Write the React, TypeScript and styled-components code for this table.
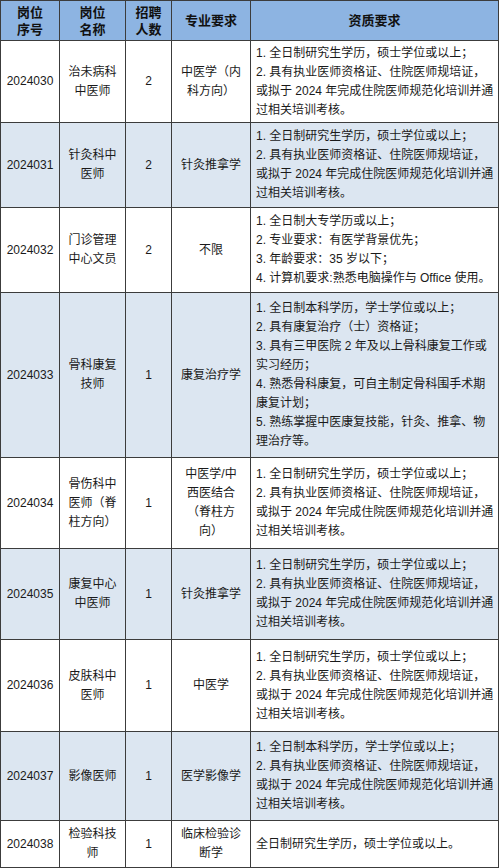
import React from "react";
import styled, { createGlobalStyle } from "styled-components";

const Global = createGlobalStyle`
  html, body { margin: 0; padding: 0; background: #ffffff; }
  body { font-family: "Liberation Sans", "Noto Sans CJK SC", sans-serif; color: #1a1a1a; }
`;

const Table = styled.table`
  border-collapse: collapse;
  table-layout: fixed;
  width: 498px;
  font-size: 12px;
`;

const HeadCell = styled.th`
  background: #8db4e2;
  border: 1px solid #3c3c3c;
  font-size: 13px;
  font-weight: 700;
  line-height: 17px;
  text-align: center;
  vertical-align: middle;
  padding: 0 2px;
  color: #111;
`;

const Row = styled.tr<{ $h: number; $alt: boolean }>`
  height: ${(p) => p.$h}px;
  background: ${(p) => (p.$alt ? "#dce6f1" : "#ffffff")};
`;

const Cell = styled.td<{ $left?: boolean }>`
  border: 1px solid #3c3c3c;
  text-align: ${(p) => (p.$left ? "left" : "center")};
  vertical-align: middle;
  padding: ${(p) => (p.$left ? "0 0 0 5px" : "0 2px")};
  line-height: 19px;
  white-space: nowrap;
  overflow: hidden;
`;

const Line = styled.div`
  display: block;
`;

type RowData = {
  id: string;
  name: string[];
  count: string;
  major: string[];
  qual: string[];
  h: number;
};

const qualA = [
  "1. 全日制研究生学历，硕士学位或以上；",
  "2. 具有执业医师资格证、住院医师规培证，",
  "或拟于 2024 年完成住院医师规范化培训并通",
  "过相关培训考核。",
];

const rows: RowData[] = [
  { id: "2024030", name: ["治未病科", "中医师"], count: "2", major: ["中医学（内", "科方向）"], qual: qualA, h: 82 },
  { id: "2024031", name: ["针灸科中", "医师"], count: "2", major: ["针灸推拿学"], qual: qualA, h: 85 },
  {
    id: "2024032",
    name: ["门诊管理", "中心文员"],
    count: "2",
    major: ["不限"],
    qual: [
      "1. 全日制大专学历或以上；",
      "2. 专业要求：有医学背景优先；",
      "3. 年龄要求：35 岁以下；",
      "4. 计算机要求:熟悉电脑操作与 Office 使用。",
    ],
    h: 85,
  },
  {
    id: "2024033",
    name: ["骨科康复", "技师"],
    count: "1",
    major: ["康复治疗学"],
    qual: [
      "1. 全日制本科学历，学士学位或以上；",
      "2. 具有康复治疗（士）资格证；",
      "3. 具有三甲医院 2 年及以上骨科康复工作或",
      "实习经历；",
      "4. 熟悉骨科康复，可自主制定骨科围手术期",
      "康复计划；",
      "5. 熟练掌握中医康复技能，针灸、推拿、物",
      "理治疗等。",
    ],
    h: 165,
  },
  {
    id: "2024034",
    name: ["骨伤科中", "医师（脊", "柱方向）"],
    count: "1",
    major: ["中医学/中", "西医结合", "（脊柱方", "向）"],
    qual: qualA,
    h: 91,
  },
  { id: "2024035", name: ["康复中心", "中医师"], count: "1", major: ["针灸推拿学"], qual: qualA, h: 91 },
  { id: "2024036", name: ["皮肤科中", "医师"], count: "1", major: ["中医学"], qual: qualA, h: 92 },
  {
    id: "2024037",
    name: ["影像医师"],
    count: "1",
    major: ["医学影像学"],
    qual: [
      "1. 全日制本科学历，学士学位或以上；",
      "2. 具有执业医师资格证、住院医师规培证，",
      "或拟于 2024 年完成住院医师规范化培训并通",
      "过相关培训考核。",
    ],
    h: 89,
  },
  {
    id: "2024038",
    name: ["检验科技", "师"],
    count: "1",
    major: ["临床检验诊", "断学"],
    qual: ["全日制研究生学历，硕士学位或以上。"],
    h: 47,
  },
];

const Lines = ({ items }: { items: string[] }) => (
  <>
    {items.map((t, i) => (
      <Line key={i}>{t}</Line>
    ))}
  </>
);

export default function App() {
  return (
    <>
      <Global />
      <Table>
        <colgroup>
          <col style={{ width: 59 }} />
          <col style={{ width: 66 }} />
          <col style={{ width: 46 }} />
          <col style={{ width: 79 }} />
          <col style={{ width: 248 }} />
        </colgroup>
        <thead>
          <tr style={{ height: 40 }}>
            <HeadCell>
              <Lines items={["岗位", "序号"]} />
            </HeadCell>
            <HeadCell>
              <Lines items={["岗位", "名称"]} />
            </HeadCell>
            <HeadCell>
              <Lines items={["招聘", "人数"]} />
            </HeadCell>
            <HeadCell>专业要求</HeadCell>
            <HeadCell>资质要求</HeadCell>
          </tr>
        </thead>
        <tbody>
          {rows.map((r, i) => (
            <Row key={r.id} $h={r.h} $alt={i % 2 === 1}>
              <Cell>{r.id}</Cell>
              <Cell>
                <Lines items={r.name} />
              </Cell>
              <Cell>{r.count}</Cell>
              <Cell>
                <Lines items={r.major} />
              </Cell>
              <Cell $left>
                <Lines items={r.qual} />
              </Cell>
            </Row>
          ))}
        </tbody>
      </Table>
    </>
  );
}
